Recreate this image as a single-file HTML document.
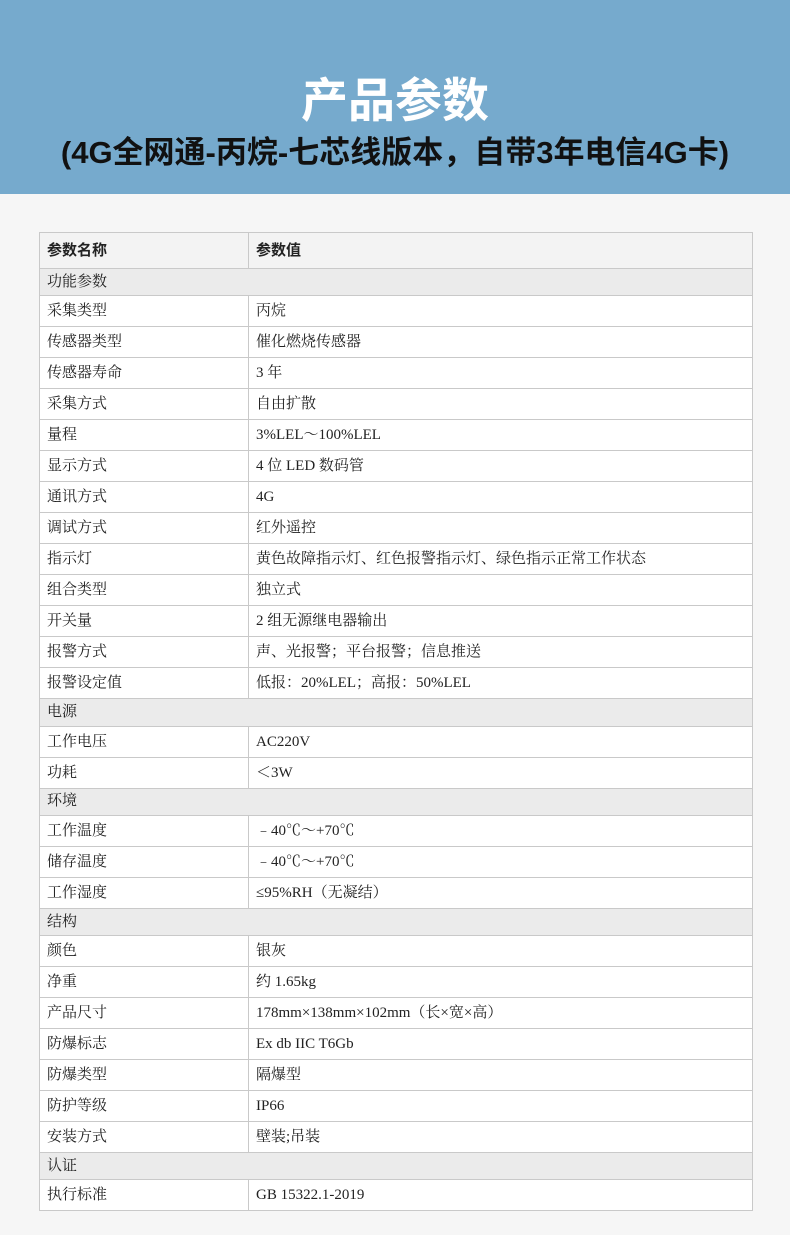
<!DOCTYPE html>
<html><head><meta charset="utf-8"><style>
body{margin:0;width:790px;height:1235px;background:#f6f6f6;overflow:hidden;font-family:"Liberation Serif","Noto Serif CJK SC",serif;}
.hd{position:absolute;left:0;top:0;width:790px;height:194px;background:#76aacd;}
.t1{position:absolute;top:71px;width:790px;text-align:center;color:#fff;font:bold 47px "Liberation Sans","Noto Sans CJK SC",sans-serif;line-height:60px;}
.t2{position:absolute;top:133px;width:790px;text-align:center;color:#111;font:bold 31px "Liberation Sans","Noto Sans CJK SC",sans-serif;line-height:40px;}
table{position:absolute;left:39px;top:232px;width:714px;border-collapse:collapse;background:#fff;}
td{border:1px solid #c9c9c9;padding:0 0 0 7px;font-size:15px;color:#222;height:30px;line-height:30px;}
td:first-child{width:201px;}
tr.h td{height:35px;background:#f3f3f3;font-weight:bold;font-family:"Liberation Sans","Noto Sans CJK SC",sans-serif;}
tr.s td{height:26.3px;line-height:25px;background:#ebebeb;}
</style></head><body>
<div class="hd"></div>
<div class="t1">产品参数</div>
<div class="t2">(4G全网通-丙烷-七芯线版本，自带3年电信4G卡)</div>
<table>
<tr class="h"><td>参数名称</td><td>参数值</td></tr>
<tr class="s"><td colspan="2">功能参数</td></tr>
<tr><td>采集类型</td><td>丙烷</td></tr>
<tr><td>传感器类型</td><td>催化燃烧传感器</td></tr>
<tr><td>传感器寿命</td><td>3 年</td></tr>
<tr><td>采集方式</td><td>自由扩散</td></tr>
<tr><td>量程</td><td>3%LEL～100%LEL</td></tr>
<tr><td>显示方式</td><td>4 位 LED 数码管</td></tr>
<tr><td>通讯方式</td><td>4G</td></tr>
<tr><td>调试方式</td><td>红外遥控</td></tr>
<tr><td>指示灯</td><td>黄色故障指示灯、红色报警指示灯、绿色指示正常工作状态</td></tr>
<tr><td>组合类型</td><td>独立式</td></tr>
<tr><td>开关量</td><td>2 组无源继电器输出</td></tr>
<tr><td>报警方式</td><td>声、光报警；平台报警；信息推送</td></tr>
<tr><td>报警设定值</td><td>低报：20%LEL；高报：50%LEL</td></tr>
<tr class="s"><td colspan="2">电源</td></tr>
<tr><td>工作电压</td><td>AC220V</td></tr>
<tr><td>功耗</td><td>＜3W</td></tr>
<tr class="s"><td colspan="2">环境</td></tr>
<tr><td>工作温度</td><td>﹣40℃～+70℃</td></tr>
<tr><td>储存温度</td><td>﹣40℃～+70℃</td></tr>
<tr><td>工作湿度</td><td>≤95%RH（无凝结）</td></tr>
<tr class="s"><td colspan="2">结构</td></tr>
<tr><td>颜色</td><td>银灰</td></tr>
<tr><td>净重</td><td>约 1.65kg</td></tr>
<tr><td>产品尺寸</td><td>178mm×138mm×102mm（长×宽×高）</td></tr>
<tr><td>防爆标志</td><td>Ex db IIC T6Gb</td></tr>
<tr><td>防爆类型</td><td>隔爆型</td></tr>
<tr><td>防护等级</td><td>IP66</td></tr>
<tr><td>安装方式</td><td>壁装;吊装</td></tr>
<tr class="s"><td colspan="2">认证</td></tr>
<tr><td>执行标准</td><td>GB 15322.1-2019</td></tr>
</table>
</body></html>
